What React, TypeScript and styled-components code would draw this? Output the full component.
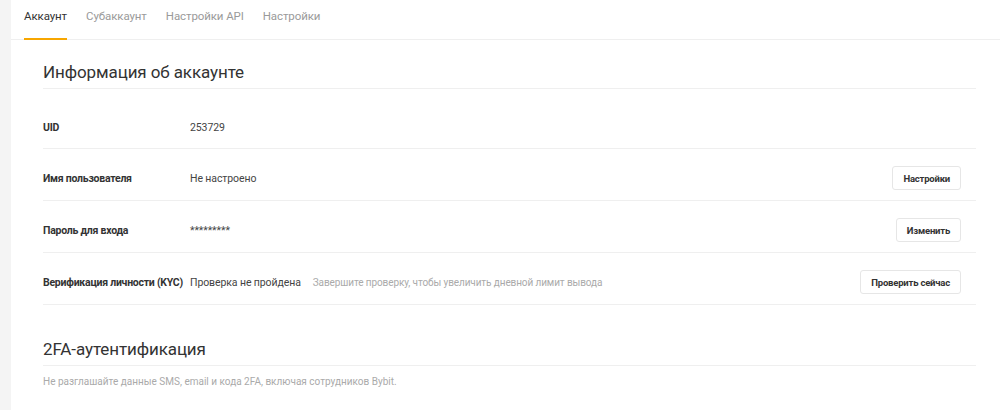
import React from 'react'
import styled, { createGlobalStyle } from 'styled-components'

const GlobalStyle = createGlobalStyle`
  * { box-sizing: border-box; }
  html, body { margin: 0; padding: 0; background: #fff; }
  body {
    font-family: Roboto, 'Noto Sans', sans-serif;
    color: #333;
  }
`

const Page = styled.div`
  display: flex;
  height: 410px;
  overflow: hidden;
  background: #f4f4f4;
`

const Panel = styled.main`
  flex: 1;
  margin-left: 11px;
  background: #fff;
`

const Tabs = styled.nav`
  display: flex;
  gap: 19px;
  height: 40px;
  padding-left: 13px;
  border-bottom: 1px solid #efefef;
`

const Tab = styled.a<{ $active?: boolean }>`
  position: relative;
  display: flex;
  align-items: flex-start;
  padding-top: 9px;
  font-size: 11.5px;
  letter-spacing: -0.1px;
  color: ${p => (p.$active ? '#333' : '#9a9a9a')};
  text-decoration: none;

  &::after {
    content: '';
    display: ${p => (p.$active ? 'block' : 'none')};
    position: absolute;
    left: 0;
    right: 0;
    bottom: -1px;
    height: 2px;
    background: #f7a600;
  }
`

const Content = styled.div`
  padding: 0 24px 0 32px;
`

const SectionTitle = styled.h2<{ $top: number }>`
  margin: 0;
  padding: ${p => p.$top}px 0 4px;
  font-size: 17px;
  line-height: 24px;
  font-weight: 400;
  letter-spacing: -0.1px;
  color: #333;
  border-bottom: 1px solid #efefef;
`

const Row = styled.div<{ $first?: boolean }>`
  display: flex;
  align-items: center;
  height: ${p => (p.$first ? 60 : 52)}px;
  padding: ${p => (p.$first ? '17px' : '7px')} 15px 0 0;
  border-bottom: 1px solid #efefef;
`

const Label = styled.div`
  width: 147px;
  flex-shrink: 0;
  font-size: 10.5px;
  font-weight: 700;
  letter-spacing: -0.25px;
  color: #333;
  white-space: nowrap;
`

const Value = styled.div`
  font-size: 10.5px;
  letter-spacing: -0.1px;
  color: #444;
`

const Hint = styled.span`
  margin-left: 12px;
  font-size: 10px;
  color: #aaa;
`

const Button = styled.button`
  margin-left: auto;
  height: 24px;
  padding: 0 10px;
  border: 1px solid #e6e6e6;
  border-radius: 3px;
  background: #fff;
  font-family: inherit;
  font-size: 9.5px;
  font-weight: 700;
  letter-spacing: -0.2px;
  color: #333;
  cursor: pointer;
`

const Note = styled.p`
  margin: 0;
  padding-top: 10px;
  font-size: 10px;
  line-height: 12px;
  color: #aaa;
`

export default function App() {
  return (
    <>
      <GlobalStyle />
      <Page>
        <Panel>
          <Tabs>
            <Tab $active href="#">Аккаунт</Tab>
            <Tab href="#">Субаккаунт</Tab>
            <Tab href="#">Настройки API</Tab>
            <Tab href="#">Настройки</Tab>
          </Tabs>
          <Content>
            <SectionTitle $top={20}>Информация об аккаунте</SectionTitle>
            <Row $first>
              <Label>UID</Label>
              <Value>253729</Value>
            </Row>
            <Row>
              <Label>Имя пользователя</Label>
              <Value>Не настроено</Value>
              <Button>Настройки</Button>
            </Row>
            <Row>
              <Label>Пароль для входа</Label>
              <Value>*********</Value>
              <Button>Изменить</Button>
            </Row>
            <Row>
              <Label>Верификация личности (KYC)</Label>
              <Value>
                Проверка не пройдена
                <Hint>Завершите проверку, чтобы увеличить дневной лимит вывода</Hint>
              </Value>
              <Button>Проверить сейчас</Button>
            </Row>
            <SectionTitle $top={32}>2FA-аутентификация</SectionTitle>
            <Note>Не разглашайте данные SMS, email и кода 2FA, включая сотрудников Bybit.</Note>
          </Content>
        </Panel>
      </Page>
    </>
  )
}
